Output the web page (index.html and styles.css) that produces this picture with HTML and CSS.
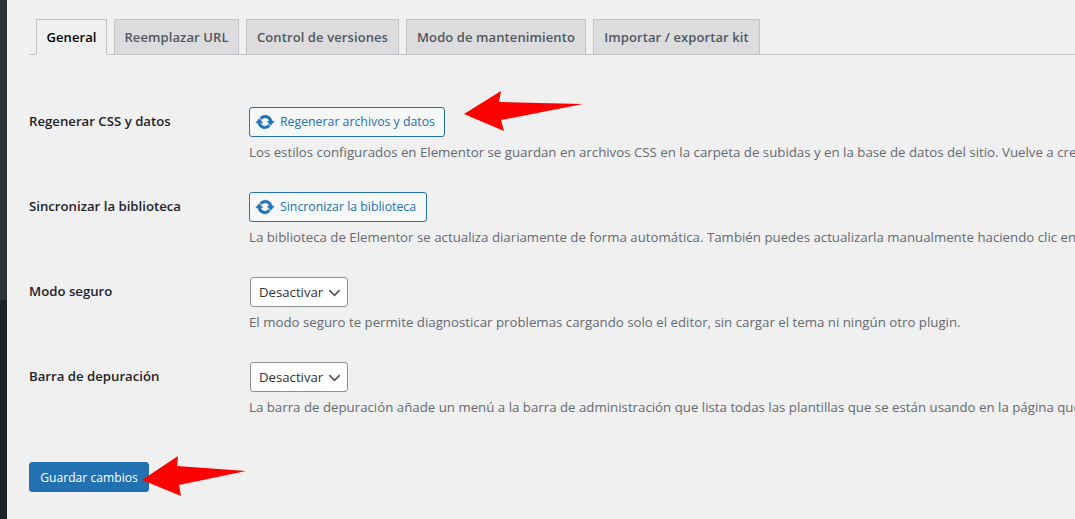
FILE: index.html
```html
<!DOCTYPE html>
<html lang="es">
<head>
<meta charset="utf-8">
<title>Ajustes</title>
<link rel="stylesheet" href="styles.css">
</head>
<body>
<div class="page">
  <aside class="sidebar"><div class="sidebar-top"></div><div class="sidebar-bottom"></div></aside>
  <main class="content">
    <nav class="tabs">
      <a class="tab active">General</a>
      <a class="tab">Reemplazar URL</a>
      <a class="tab">Control de versiones</a>
      <a class="tab">Modo de mantenimiento</a>
      <a class="tab">Importar / exportar kit</a>
    </nav>
    <form class="form">
      <div class="row">
        <div class="label">Regenerar CSS y datos</div>
        <div class="field">
          <button type="button" class="btn btn-regen"><svg class="sync" viewBox="0 0 20 20"><path d="M10.2 3.28c3.53 0 6.43 2.61 6.92 6h2.08l-3.5 4-3.5-4h2.32c-.45-1.97-2.21-3.45-4.32-3.45-1.45 0-2.73.71-3.54 1.78L4.95 5.66C6.23 4.2 8.11 3.28 10.2 3.28zm-.4 13.44c-3.52 0-6.43-2.61-6.92-6H.8l3.5-4 3.5 4H5.48c.45 1.97 2.21 3.45 4.32 3.45 1.45 0 2.73-.71 3.54-1.78l1.71 1.95c-1.28 1.46-3.15 2.38-5.25 2.38z"/></svg>Regenerar archivos y datos</button>
          <p class="desc">Los estilos configurados en Elementor se guardan en archivos CSS en la carpeta de subidas y en la base de datos del sitio. Vuelve a crearlos si tienes problemas de estilos.</p>
        </div>
      </div>
      <div class="row">
        <div class="label">Sincronizar la biblioteca</div>
        <div class="field">
          <button type="button" class="btn btn-sync"><svg class="sync" viewBox="0 0 20 20"><path d="M10.2 3.28c3.53 0 6.43 2.61 6.92 6h2.08l-3.5 4-3.5-4h2.32c-.45-1.97-2.21-3.45-4.32-3.45-1.45 0-2.73.71-3.54 1.78L4.95 5.66C6.23 4.2 8.11 3.28 10.2 3.28zm-.4 13.44c-3.52 0-6.43-2.61-6.92-6H.8l3.5-4 3.5 4H5.48c.45 1.97 2.21 3.45 4.32 3.45 1.45 0 2.73-.71 3.54-1.78l1.71 1.95c-1.28 1.46-3.15 2.38-5.25 2.38z"/></svg>Sincronizar la biblioteca</button>
          <p class="desc">La biblioteca de Elementor se actualiza diariamente de forma automática. También puedes actualizarla manualmente haciendo clic en el botón de sincronizar.</p>
        </div>
      </div>
      <div class="row">
        <div class="label">Modo seguro</div>
        <div class="field">
          <div class="select">Desactivar<svg class="chev" viewBox="0 0 16 16"><path d="M2.500 5.500 8 11l5.500-5.500"/></svg></div>
          <p class="desc">El modo seguro te permite diagnosticar problemas cargando solo el editor, sin cargar el tema ni ningún otro plugin.</p>
        </div>
      </div>
      <div class="row">
        <div class="label">Barra de depuración</div>
        <div class="field">
          <div class="select">Desactivar<svg class="chev" viewBox="0 0 16 16"><path d="M2.500 5.500 8 11l5.500-5.500"/></svg></div>
          <p class="desc">La barra de depuración añade un menú a la barra de administración que lista todas las plantillas que se están usando en la página que estás viendo.</p>
        </div>
      </div>
      <button type="button" class="save">Guardar cambios</button>
    </form>
  </main>
</div>
<svg class="arrows" viewBox="0 0 1075 519"><polygon points="464,114 501,91 499,102 583,104 501,120 504,131"/><polygon points="142,480 178,456 177,466 246,471 179,485 181,496"/></svg>
</body>
</html>
```
FILE: styles.css
```css
* { box-sizing: border-box; }
html, body { margin: 0; height: 519px; overflow: hidden; }
body { background: #f0f0f1; color: #1d2327; font: 13px/1.4 "Open Sans", "Noto Sans", sans-serif; position: relative; }
.page { display: flex; height: 519px; }
.sidebar { width: 7px; flex: none; display: flex; flex-direction: column; }
.sidebar-top { height: 300px; background: #2c3338; }
.sidebar-bottom { flex: 1; background: #1d2327; }
.content { flex: 1; min-width: 0; padding: 19px 0 0 22px; overflow: hidden; }
.tabs { display: grid; grid-template-columns: 71px 125px 153px 180px 167px; height: 36px; padding-left: 7px; column-gap: 7px; border-bottom: 1px solid #c3c4c7; }
.tab { height: 36px; background: #dcdcde; border: 1px solid #c3c4c7; color: #50575e; font-size: 13px; font-weight: 600; letter-spacing: .1px; line-height: 34px; text-align: center; white-space: nowrap; }
.tab.active { background: #f0f0f1; border-bottom-color: #f0f0f1; color: #000; }
.form { padding-top: 52px; }
.row { display: grid; grid-template-columns: 220px 1fr; height: 85px; }
.label { font-size: 13.2px; font-weight: 600; line-height: 20px; padding-top: 4px; white-space: nowrap; }
.field { min-width: 0; }
.btn { display: flex; align-items: center; height: 30px; padding: 0; background: #f6f7f7; border: 1px solid #2271b1; border-radius: 3px; color: #2271b1; font: inherit; font-size: 12.3px; white-space: nowrap; }
.btn-regen { width: 196px; padding-left: 6px; }
.btn-sync { width: 178px; padding-left: 6px; }
.sync { width: 20px; height: 20px; margin: -1px 5px 0 -1px; fill: #2271b1; stroke: #2271b1; stroke-width: .6; }
.desc { margin: 5px 0 0; color: #646970; font-size: 13.28px; line-height: 20px; white-space: nowrap; }
.select { display: flex; align-items: center; justify-content: space-between; width: 98px; height: 30px; margin-left: 1px; padding: 0 5px 0 8px; background: #fff; border: 1px solid #8c8f94; border-radius: 3px; color: #2c3338; font-size: 13.2px; }
.chev { width: 15px; height: 15px; fill: none; stroke: #50575e; stroke-width: 1.8; }
.save { display: block; width: 120px; height: 30px; margin-top: 15px; padding: 1px 0 0; background: #2271b1; border: 1px solid #2271b1; border-radius: 3px; color: #fff; font: inherit; font-size: 12.15px; }
.arrows { position: absolute; left: 0; top: 0; width: 1075px; height: 519px; fill: #ff0000; pointer-events: none; }
```
